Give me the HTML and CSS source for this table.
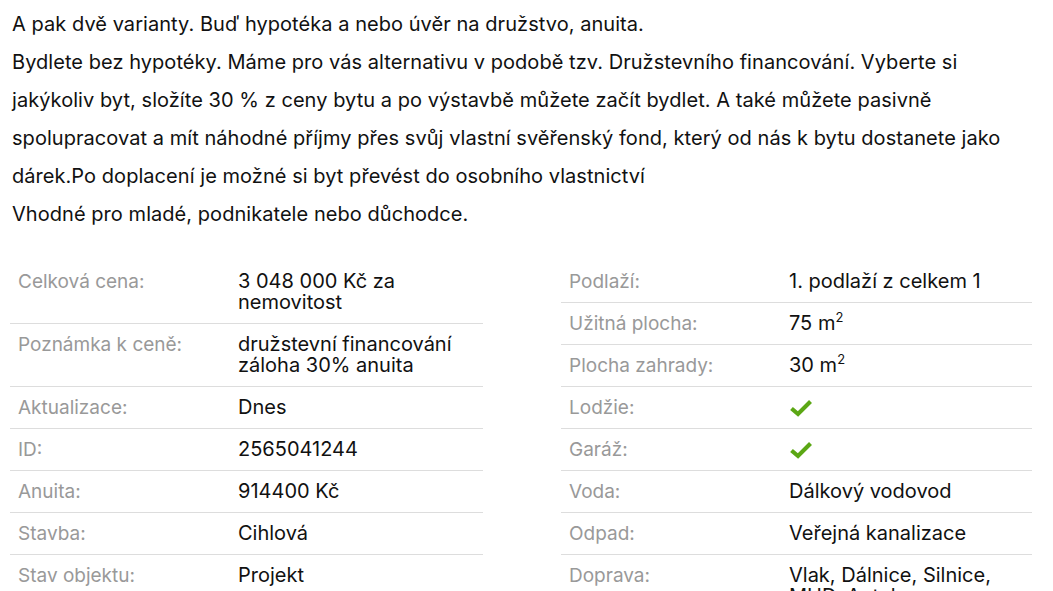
FILE: index.html
```html
<!DOCTYPE html>
<html lang="cs">
<head>
<meta charset="utf-8">
<link rel="stylesheet" href="styles.css">
</head>
<body>
<div class="page">
  <div class="desc">
    <p>A pak dvě varianty. Buď hypotéka a nebo úvěr na družstvo, anuita.</p>
    <p>Bydlete bez hypotéky. Máme pro vás alternativu v podobě tzv. Družstevního financování. Vyberte si jakýkoliv byt, složíte 30 % z ceny bytu a po výstavbě můžete začít bydlet. A také můžete pasivně spolupracovat a mít náhodné příjmy přes svůj vlastní svěřenský fond, který od nás k bytu dostanete jako dárek.Po doplacení je možné si byt převést do osobního vlastnictví</p>
    <p>Vhodné pro mladé, podnikatele nebo důchodce.</p>
  </div>
  <div class="params">
    <dl class="table">
      <div class="row"><dt>Celková cena:</dt><dd>3 048 000 Kč za<br>nemovitost</dd></div>
      <div class="row"><dt>Poznámka k ceně:</dt><dd>družstevní financování<br>záloha 30% anuita</dd></div>
      <div class="row"><dt>Aktualizace:</dt><dd>Dnes</dd></div>
      <div class="row"><dt>ID:</dt><dd>2565041244</dd></div>
      <div class="row"><dt>Anuita:</dt><dd>914400 Kč</dd></div>
      <div class="row"><dt>Stavba:</dt><dd>Cihlová</dd></div>
      <div class="row"><dt>Stav objektu:</dt><dd>Projekt</dd></div>
    </dl>
    <dl class="table">
      <div class="row"><dt>Podlaží:</dt><dd>1. podlaží z celkem 1</dd></div>
      <div class="row"><dt>Užitná plocha:</dt><dd>75 m<sup>2</sup></dd></div>
      <div class="row"><dt>Plocha zahrady:</dt><dd>30 m<sup>2</sup></dd></div>
      <div class="row"><dt>Lodžie:</dt><dd><svg class="check" viewBox="0 0 24 18" width="24" height="18"><path d="M2.5 9.5 L9 15 L21.5 2.5" fill="none" stroke="#5ba714" stroke-width="4.2"/></svg></dd></div>
      <div class="row"><dt>Garáž:</dt><dd><svg class="check" viewBox="0 0 24 18" width="24" height="18"><path d="M2.5 9.5 L9 15 L21.5 2.5" fill="none" stroke="#5ba714" stroke-width="4.2"/></svg></dd></div>
      <div class="row"><dt>Voda:</dt><dd>Dálkový vodovod</dd></div>
      <div class="row"><dt>Odpad:</dt><dd>Veřejná kanalizace</dd></div>
      <div class="row"><dt>Doprava:</dt><dd>Vlak, Dálnice, Silnice,<br>MHD, Autobus</dd></div>
    </dl>
  </div>
</div>
</body>
</html>
```
FILE: styles.css
```css
html, body {
  margin: 0;
  padding: 0;
  background: #fff;
}
body {
  font-family: Inter, "Liberation Sans", sans-serif;
  color: #111;
}
.page {
  padding: 5px 10px 0 10px;
}
.desc {
  padding-left: 2px;
  max-width: 1025px;
  font-size: 20px;
  line-height: 38px;
  letter-spacing: 0.05px;
}
.desc p {
  margin: 0;
}
.params {
  display: grid;
  grid-template-columns: 473px 471px;
  column-gap: 78px;
  margin-top: 28px;
  align-items: start;
}
.table {
  margin: 0;
}
.row {
  display: grid;
  grid-template-columns: 228px 1fr;
  padding: 10px 0;
  border-bottom: 1px solid #ddd;
  line-height: 21px;
}
.row dt {
  padding-left: 8px;
  color: #999;
  font-size: 19px;
}
.row dd {
  margin: 0;
  font-size: 20px;
  color: #111;
}
.row sup {
  font-size: 13px;
  line-height: 0;
  vertical-align: 8px;
}
.check {
  display: block;
  margin-top: 2px;
}
```
